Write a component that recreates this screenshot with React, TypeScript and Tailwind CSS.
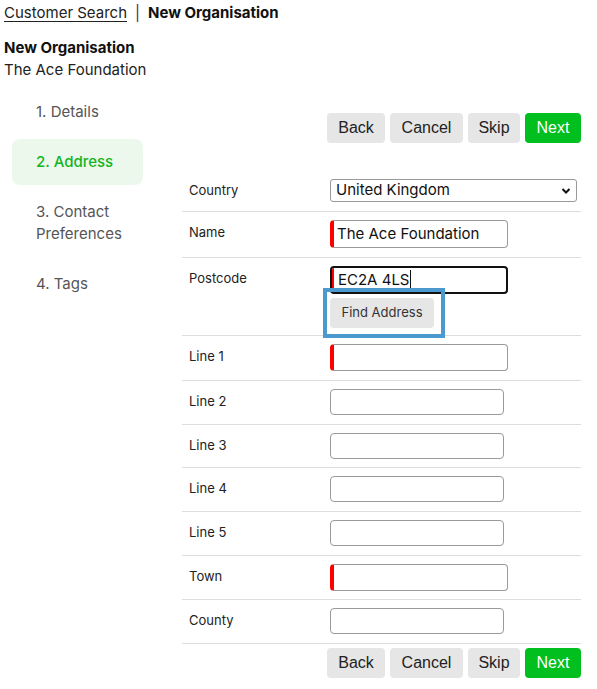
import React from "react";

const font = { fontFamily: "Inter, 'Noto Sans', sans-serif" };

function ActionButtons() {
  return (
    <div className="flex justify-end gap-[5px] text-[16px] font-['Liberation_Sans',Arial,sans-serif]">
      <button className="h-[30px] w-[58px] rounded-[4px] bg-[#e6e6e6] text-[#222]">Back</button>
      <button className="h-[30px] w-[73px] rounded-[4px] bg-[#e6e6e6] text-[#222]">Cancel</button>
      <button className="h-[30px] w-[52px] rounded-[4px] bg-[#e6e6e6] text-[#222]">Skip</button>
      <button className="h-[30px] w-[56px] rounded-[4px] bg-[#00bf1e] text-white">Next</button>
    </div>
  );
}

function TextInput({ required, value, h }: { required?: boolean; value?: string; h?: string }) {
  return (
    <div
      className={
        "flex items-center rounded-[4px] border border-[#9a9a9a] bg-white text-[15px] text-[#111] pl-[3px] " +
        (required ? "border-l-[4px] border-l-[#ff0000] w-[178px] " : "w-[174px] ") +
        (h ?? "h-[26px]")
      }
    >
      {value}
    </div>
  );
}

function Row({ label, children, pb }: { label: string; children: React.ReactNode; pb?: string }) {
  return (
    <div className={"flex pt-[8px] border-b border-[#dedede] " + (pb ?? "pb-[9px]")}>
      <div className="w-[148px] pl-[7px] text-[13px] leading-[20px] text-[#222] pt-[2px]">{label}</div>
      <div className="flex-1">{children}</div>
    </div>
  );
}

export default function App() {
  return (
    <div className="w-[597px] h-[689px] bg-white text-[#111]" style={font}>
      <div className="pl-[4px] pt-[2px]">
        <div className="text-[15px] leading-[22px] flex items-center">
          <span className="underline underline-offset-[3px] decoration-[1px] text-[#222]">Customer Search</span>
          <span className="mx-[8px] text-[#4a2a4a]">|</span>
          <span className="font-bold">New Organisation</span>
        </div>
        <div className="mt-[13px] text-[15px] leading-[22px] font-bold">New Organisation</div>
        <div className="text-[15px] leading-[22px] text-[#222]">The Ace Foundation</div>
      </div>
      <div className="flex">
        <div className="w-[182px] pl-[12px] pt-[8px] shrink-0">
          <div className="w-[131px] flex flex-col gap-[4px] text-[15px] leading-[22px] text-[#555]">
            <div className="py-[12px] pl-[24px]">1. Details</div>
            <div className="py-[12px] pl-[24px] rounded-[8px] bg-[#edf8ec] text-[#12b51f] font-medium">2. Address</div>
            <div className="py-[12px] pl-[24px]">3. Contact<br />Preferences</div>
            <div className="py-[12px] pl-[24px]">4. Tags</div>
          </div>
        </div>
        <div className="w-[399px]">
          <div className="pt-[32px] pb-[28px]">
            <ActionButtons />
          </div>
          <div className="flex pt-[8px] pb-[9px] border-b border-[#dedede]">
            <div className="w-[148px] pl-[7px] text-[13px] leading-[20px] text-[#222] pt-[1px]">Country</div>
            <div className="flex-1">
              <div className="w-[247px] h-[23px] rounded-[3px] border border-[#9a9a9a] flex items-center justify-between pl-[5px] pr-[5px] text-[15px] text-[#111]">
                <span>United Kingdom</span>
                <svg width="10" height="8" viewBox="0 0 10 8">
                  <path d="M1.5 2 L5 5.5 L8.5 2" fill="none" stroke="#111" strokeWidth="2" />
                </svg>
              </div>
            </div>
          </div>
          <Row label="Name">
            <TextInput required h="h-[28px]" value="The Ace Foundation" />
          </Row>
          <div className="flex pt-[8px] pb-[7px] border-b border-[#dedede] relative">
            <div className="w-[148px] pl-[7px] text-[13px] leading-[20px] text-[#222] pt-[2px]">Postcode</div>
            <div className="flex-1 flex flex-col gap-[4px]">
              <div className="w-[178px] h-[28px] rounded-[4px] border-2 border-[#111] flex items-center text-[15px] text-[#111]">
                <div className="w-[2px] h-full bg-[#ff0000] rounded-l-[3px]"></div>
                <span className="pl-[4px]">EC2A 4LS</span>
                <span className="w-[1px] h-[20px] bg-[#111] ml-[1px]"></span>
              </div>
              <button className="w-[104px] h-[30px] rounded-[4px] bg-[#e6e6e6] text-[13px] text-[#333]">Find Address</button>
            </div>
            <div className="absolute left-[141px] top-[30px] w-[122px] h-[50px] border-[4px] border-[#4a99cf]"></div>
          </div>
          <Row label="Line 1">
            <TextInput required h="h-[27px]" />
          </Row>
          <Row label="Line 2">
            <TextInput />
          </Row>
          <Row label="Line 3" pb="pb-[8px]">
            <TextInput />
          </Row>
          <Row label="Line 4">
            <TextInput />
          </Row>
          <Row label="Line 5">
            <TextInput />
          </Row>
          <Row label="Town" pb="pb-[8px]">
            <TextInput required h="h-[27px]" />
          </Row>
          <Row label="County">
            <TextInput />
          </Row>
          <div className="pt-[4px]">
            <ActionButtons />
          </div>
        </div>
      </div>
    </div>
  );
}
